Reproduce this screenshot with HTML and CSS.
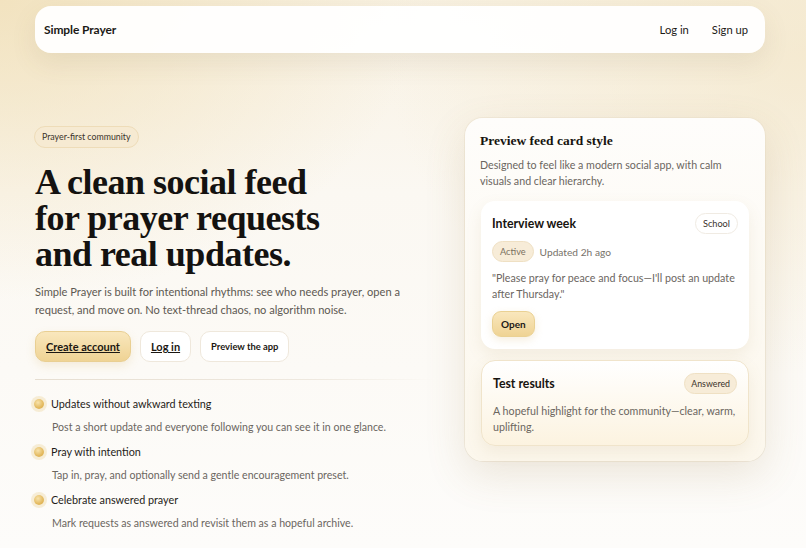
FILE: index.html
```html
<!DOCTYPE html>
<html lang="en">
<head>
<meta charset="utf-8">
<title>Simple Prayer</title>
<link rel="stylesheet" href="styles.css">
</head>
<body>
<div class="page">
  <header class="nav">
    <div class="brand">Simple Prayer</div>
    <nav class="nav-links">
      <a href="#">Log in</a>
      <a href="#">Sign up</a>
    </nav>
  </header>

  <main class="hero">
    <section class="hero-left">
      <span class="tag">Prayer-first community</span>
      <h1 class="headline">A clean social feed<br>for prayer requests<br>and real updates.</h1>
      <p class="lead">Simple Prayer is built for intentional rhythms: see who needs prayer, open a request, and move on. No text-thread chaos, no algorithm noise.</p>
      <div class="actions">
        <a class="btn btn-primary" href="#">Create account</a>
        <a class="btn btn-ghost" href="#">Log in</a>
        <a class="btn btn-plain" href="#">Preview the app</a>
      </div>
      <div class="divider"></div>
      <ul class="features">
        <li class="feature">
          <div class="feature-title"><span class="dot"></span>Updates without awkward texting</div>
          <div class="feature-desc">Post a short update and everyone following you can see it in one glance.</div>
        </li>
        <li class="feature">
          <div class="feature-title"><span class="dot"></span>Pray with intention</div>
          <div class="feature-desc">Tap in, pray, and optionally send a gentle encouragement preset.</div>
        </li>
        <li class="feature">
          <div class="feature-title"><span class="dot"></span>Celebrate answered prayer</div>
          <div class="feature-desc">Mark requests as answered and revisit them as a hopeful archive.</div>
        </li>
      </ul>
    </section>

    <aside class="preview">
      <h2 class="preview-title">Preview feed card style</h2>
      <p class="preview-desc">Designed to feel like a modern social app, with calm visuals and clear hierarchy.</p>

      <article class="card">
        <div class="card-head">
          <h3 class="card-title">Interview week</h3>
          <span class="chip chip-outline">School</span>
        </div>
        <div class="card-meta">
          <span class="chip chip-warm">Active</span>
          <span class="meta-text">Updated 2h ago</span>
        </div>
        <p class="card-body">"Please pray for peace and focus—I'll post an update after Thursday."</p>
        <a class="btn-open" href="#">Open</a>
      </article>

      <article class="card card-answered">
        <div class="card-head">
          <h3 class="card-title">Test results</h3>
          <span class="chip chip-warm chip-dark">Answered</span>
        </div>
        <p class="card-body card-body-tight">A hopeful highlight for the community—clear, warm, uplifting.</p>
      </article>
    </aside>
  </main>
</div>
</body>
</html>
```

FILE: styles.css
```css
* { box-sizing: border-box; }

html, body {
  margin: 0;
  height: 100%;
}

body {
  font-family: Lato, "Noto Sans", sans-serif;
  color: #1c1a17;
  background:
    radial-gradient(ellipse 420px 300px at 0% 0%, rgba(240, 222, 180, 0.75), rgba(240, 222, 180, 0) 100%),
    radial-gradient(ellipse 420px 320px at 100% 10%, rgba(243, 230, 200, 0.7), rgba(243, 230, 200, 0) 100%),
    linear-gradient(180deg, #f8f1e2 0%, #fbf8f2 35%, #fdfcfa 100%);
  overflow: hidden;
}

a { color: inherit; text-decoration: none; }

.page {
  width: 730px;
  margin-left: 35px;
  padding-top: 6px;
}

/* NAV */
.nav {
  height: 47px;
  display: flex;
  align-items: center;
  justify-content: space-between;
  padding: 0 17px 0 9px;
  background: rgba(255, 255, 255, 0.94);
  border-radius: 16px;
  box-shadow: 0 10px 26px rgba(120, 100, 60, 0.10);
}

.brand {
  font-weight: 700;
  font-size: 12px;
  letter-spacing: -0.1px;
}

.nav-links {
  display: flex;
  gap: 23px;
  font-size: 11.2px;
}

/* HERO */
.hero {
  display: grid;
  grid-template-columns: 1fr 300px;
  column-gap: 31px;
  align-items: start;
  margin-top: 65px;
}

.hero-left {
  padding-top: 6px;
}

.tag {
  display: inline-block;
  font-size: 8.8px;
  line-height: 20px;
  padding: 0 7px;
  border-radius: 11px;
  background: #f6ead2;
  border: 1px solid #eedcb8;
  color: #3a332a;
  margin-left: -1px;
}

.headline {
  font-family: "Liberation Serif", "DejaVu Serif", serif;
  font-weight: 700;
  font-size: 36px;
  line-height: 36px;
  letter-spacing: -0.5px;
  margin: 16px 0 0;
  color: #141210;
}

.lead {
  font-size: 11.1px;
  line-height: 18px;
  color: #5d5851;
  margin: 11px 0 0;
}

.actions {
  display: flex;
  gap: 9px;
  margin-top: 12px;
}

.btn {
  display: inline-flex;
  align-items: center;
  height: 31px;
  padding: 0 10px;
  border-radius: 10px;
  font-weight: 700;
  font-size: 11px;
  color: #1b1712;
}

.btn-primary {
  background: linear-gradient(180deg, #f9e7bd 0%, #efd394 100%);
  border: 1px solid #e9cf92;
  text-decoration: underline;
  box-shadow: 0 4px 10px rgba(210, 170, 90, 0.18);
}

.btn-ghost {
  background: #fff;
  border: 1px solid #efe8dc;
  text-decoration: underline;
}

.btn-plain {
  background: #fff;
  border: 1px solid #efe8dc;
  font-size: 9.4px;
}

.divider {
  height: 1px;
  margin-top: 17px;
  background: linear-gradient(90deg, rgba(225, 215, 200, 0.8), rgba(225, 215, 200, 0.5) 70%, rgba(225, 215, 200, 0));
}

.features {
  list-style: none;
  padding: 0;
  margin: 14px 0 0;
}

.feature {
  margin-bottom: 5px;
}

.feature-title {
  display: flex;
  align-items: center;
  font-size: 10.8px;
  line-height: 20px;
  color: #1f1c18;
}

.dot {
  width: 10px;
  height: 10px;
  border-radius: 50%;
  margin: 0 7px 0 -1px;
  background: radial-gradient(circle at 40% 35%, #f8e3ac 0%, #e3b95e 60%, #d7a848 100%);
  box-shadow: 0 0 0 3px rgba(240, 220, 170, 0.45);
  flex: none;
}

.feature-desc {
  font-size: 10.6px;
  line-height: 20px;
  color: #6b665f;
  margin-top: 3px;
  padding-left: 17px;
}

/* PREVIEW CARD */
.preview {
  background: linear-gradient(180deg, #fefdfb 0%, #fcf7ec 100%);
  border-radius: 18px;
  padding: 14px 16px 15px 15px;
  box-shadow: 0 14px 40px rgba(150, 120, 60, 0.16), 0 0 0 1px rgba(235, 225, 205, 0.5);
}

.preview-title {
  font-family: "Liberation Serif", "DejaVu Serif", serif;
  font-weight: 700;
  font-size: 13.5px;
  line-height: 17px;
  margin: 0;
  color: #17140f;
}

.preview-desc {
  font-size: 10.7px;
  line-height: 16px;
  color: #6b665f;
  margin: 8px 0 0;
}

.card {
  margin-top: 12px;
  margin-left: 1px;
  background: #fff;
  border-radius: 14px;
  padding: 12px 11px 12px;
  box-shadow: 0 6px 16px rgba(160, 130, 70, 0.10);
}

.card + .card {
  margin-top: 11px;
}

.card-head {
  display: flex;
  align-items: center;
  justify-content: space-between;
}

.card-title {
  margin: 0;
  font-size: 12.3px;
  font-weight: 700;
  color: #17140f;
}

.chip {
  display: inline-block;
  font-size: 9.2px;
  line-height: 19px;
  padding: 0 7px;
  border-radius: 11px;
}

.chip-outline {
  border: 1px solid #f0ebe3;
  background: #fff;
  color: #3a352e;
}

.chip-warm {
  background: #f7ecd8;
  border: 1px solid #efe0c3;
  color: #7a7060;
}

.chip-dark {
  color: #3a332a;
  font-size: 8.8px;
  padding: 0 6px;
}

.card-meta {
  display: flex;
  align-items: center;
  gap: 6px;
  margin-top: 7px;
}

.meta-text {
  font-size: 10.2px;
  color: #77726a;
}

.card-body {
  font-size: 10.7px;
  line-height: 16px;
  color: #6b665f;
  margin: 8px 0 0;
}

.btn-open {
  display: inline-flex;
  align-items: center;
  height: 26px;
  padding: 0 8px;
  margin-top: 9px;
  border-radius: 9px;
  font-size: 10px;
  font-weight: 700;
  background: linear-gradient(180deg, #f9e7bd 0%, #efd394 100%);
  border: 1px solid #ead193;
  box-shadow: 0 3px 8px rgba(210, 170, 90, 0.2);
}

.card-answered {
  background: linear-gradient(180deg, #ffffff 0%, #fcf3e0 100%);
  border: 1px solid #f0e4cb;
  padding-bottom: 10px;
}

.card-body-tight {
  margin-top: 9px;
}
```
